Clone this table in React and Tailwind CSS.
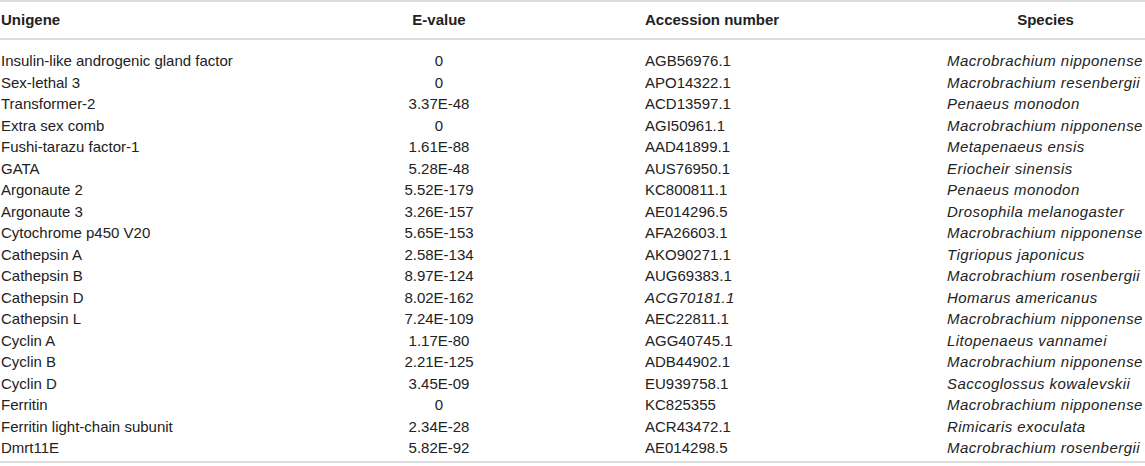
const rows = [
  ["Insulin-like androgenic gland factor", "0", "AGB56976.1", "Macrobrachium nipponense"],
  ["Sex-lethal 3", "0", "APO14322.1", "Macrobrachium resenbergii"],
  ["Transformer-2", "3.37E-48", "ACD13597.1", "Penaeus monodon"],
  ["Extra sex comb", "0", "AGI50961.1", "Macrobrachium nipponense"],
  ["Fushi-tarazu factor-1", "1.61E-88", "AAD41899.1", "Metapenaeus ensis"],
  ["GATA", "5.28E-48", "AUS76950.1", "Eriocheir sinensis"],
  ["Argonaute 2", "5.52E-179", "KC800811.1", "Penaeus monodon"],
  ["Argonaute 3", "3.26E-157", "AE014296.5", "Drosophila melanogaster"],
  ["Cytochrome p450 V20", "5.65E-153", "AFA26603.1", "Macrobrachium nipponense"],
  ["Cathepsin A", "2.58E-134", "AKO90271.1", "Tigriopus japonicus"],
  ["Cathepsin B", "8.97E-124", "AUG69383.1", "Macrobrachium rosenbergii"],
  ["Cathepsin D", "8.02E-162", "ACG70181.1", "Homarus americanus", true],
  ["Cathepsin L", "7.24E-109", "AEC22811.1", "Macrobrachium nipponense"],
  ["Cyclin A", "1.17E-80", "AGG40745.1", "Litopenaeus vannamei"],
  ["Cyclin B", "2.21E-125", "ADB44902.1", "Macrobrachium nipponense"],
  ["Cyclin D", "3.45E-09", "EU939758.1", "Saccoglossus kowalevskii"],
  ["Ferritin", "0", "KC825355", "Macrobrachium nipponense"],
  ["Ferritin light-chain subunit", "2.34E-28", "ACR43472.1", "Rimicaris exoculata"],
  ["Dmrt11E", "5.82E-92", "AE014298.5", "Macrobrachium rosenbergii"],
];

const cols = "grid grid-cols-[300px_278px_368px_199px]";

export default function App() {
  return (
    <div className="w-[1145px] h-[466px] overflow-hidden bg-white text-[#222] text-[15px] font-['Liberation_Sans',Arial,sans-serif]">
      <div className="border-t-2 border-b-2 border-[#dcdcdc]">
        <div className={`${cols} h-[36px] items-center font-bold`}>
          <div className="pl-[1px]">Unigene</div>
          <div className="text-center">E-value</div>
          <div className="pl-[67px]">Accession number</div>
          <div className="text-center">Species</div>
        </div>
      </div>
      <div className="pt-[10px] pb-[2px] border-b-2 border-[#dcdcdc]">
        {rows.map(([gene, evalue, acc, species, accItalic]) => (
          <div key={gene} className={`${cols} h-[21.5px] leading-[21.5px]`}>
            <div className="pl-[1px] whitespace-nowrap">{gene}</div>
            <div className="text-center">{evalue}</div>
            <div className={accItalic ? "pl-[67px] italic tracking-[0.3px]" : "pl-[67px]"}>{acc}</div>
            <div className="pl-[1px] italic tracking-[0.45px] whitespace-nowrap">{species}</div>
          </div>
        ))}
      </div>
    </div>
  );
}
